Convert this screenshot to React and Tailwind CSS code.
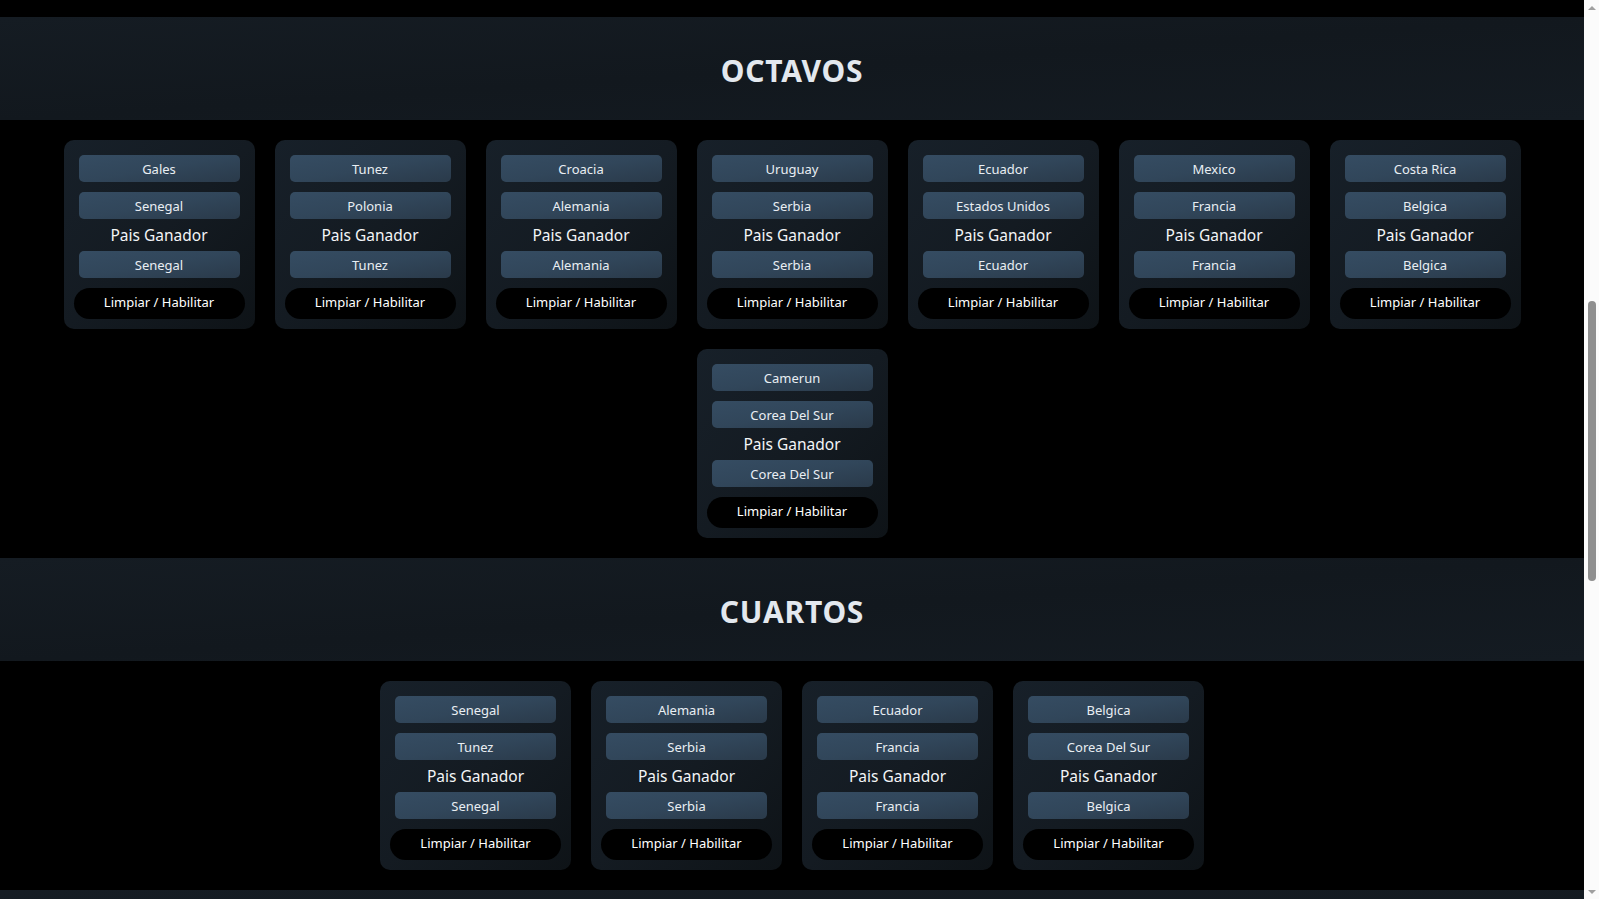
import React from "react";

const octavos = [
  { a: "Gales", b: "Senegal", win: "Senegal" },
  { a: "Tunez", b: "Polonia", win: "Tunez" },
  { a: "Croacia", b: "Alemania", win: "Alemania" },
  { a: "Uruguay", b: "Serbia", win: "Serbia" },
  { a: "Ecuador", b: "Estados Unidos", win: "Ecuador" },
  { a: "Mexico", b: "Francia", win: "Francia" },
  { a: "Costa Rica", b: "Belgica", win: "Belgica" },
  { a: "Camerun", b: "Corea Del Sur", win: "Corea Del Sur" },
];

const cuartos = [
  { a: "Senegal", b: "Tunez", win: "Senegal" },
  { a: "Alemania", b: "Serbia", win: "Serbia" },
  { a: "Ecuador", b: "Francia", win: "Francia" },
  { a: "Belgica", b: "Corea Del Sur", win: "Belgica" },
];

const font = { fontFamily: '"Noto Sans", "Open Sans", sans-serif' };

function Pais({ name }) {
  return (
    <button className="m-[5px] h-[27px] w-[161px] rounded-[5px] bg-gradient-to-br from-[#354c62] via-[#31465a] to-[#2a3a4a] pt-px text-[13px] leading-[26px] text-[#e9eef3]">
      {name}
    </button>
  );
}

function Partido({ a, b, win }) {
  return (
    <div className="m-[10px] flex w-[191px] flex-col items-center rounded-[10px] bg-gradient-to-br from-[#172029] via-[#141b22] to-[#0e1317] p-[10px]">
      <Pais name={a} />
      <Pais name={b} />
      <p className="h-[22px] text-[15.5px] leading-[22px] text-[#f3f5f7]">Pais Ganador</p>
      <Pais name={win} />
      <button className="mt-[5px] h-[31px] w-[171px] rounded-full bg-black pb-[2px] text-[13px] text-white">
        Limpiar / Habilitar
      </button>
    </div>
  );
}

function Ronda({ titulo, partidos }) {
  return (
    <section>
      <div className="flex h-[103px] items-center justify-center bg-gradient-to-br from-[#151c23] via-[#12181e] to-[#141b22] pt-[4px]">
        <h2 className="text-[30px] font-bold tracking-wide text-[#e3e8ee]">{titulo}</h2>
      </div>
      <div className="flex flex-wrap justify-center py-[10px]">
        {partidos.map((p, i) => (
          <Partido key={titulo + i} {...p} />
        ))}
      </div>
    </section>
  );
}

function Scrollbar() {
  return (
    <div className="flex w-[15px] shrink-0 flex-col items-center bg-[#fbfbfb]">
      <div className="flex h-[15px] items-center justify-center">
        <div className="h-0 w-0 border-x-[4px] border-b-[4px] border-x-transparent border-b-[#a0a0a0]" />
      </div>
      <div className="h-[286px]" />
      <div className="h-[280px] w-[8px] rounded-full bg-[#8f8f8f]" />
      <div className="flex-1" />
      <div className="flex h-[15px] items-center justify-center">
        <div className="h-0 w-0 border-x-[4px] border-t-[4px] border-x-transparent border-t-[#a0a0a0]" />
      </div>
    </div>
  );
}

export default function App() {
  return (
    <div className="flex h-screen overflow-hidden bg-black" style={font}>
      <main className="min-w-0 flex-1">
        <div className="h-[17px]" />
        <Ronda titulo="OCTAVOS" partidos={octavos} />
        <Ronda titulo="CUARTOS" partidos={cuartos} />
        <div className="h-[103px] bg-gradient-to-br from-[#151c23] to-[#12181e]" />
      </main>
      <Scrollbar />
    </div>
  );
}
